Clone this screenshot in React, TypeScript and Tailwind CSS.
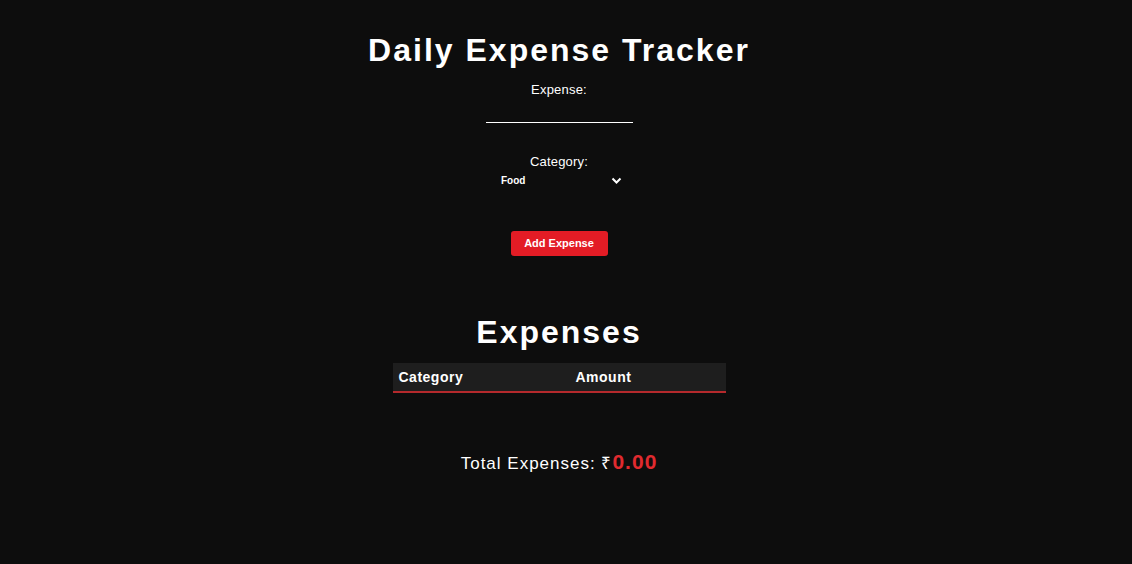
import React from "react";

export default function App() {
  return (
    <div className="min-h-[564px] w-full bg-[#0d0d0d] text-white" style={{ fontFamily: '"Liberation Sans", Arial, sans-serif' }}>
      <div className="flex flex-col items-center pt-[31px] pr-[14px]">
        <h1 className="text-[32px] leading-[38px] font-bold tracking-[2px] text-white">Daily Expense Tracker</h1>
        <label className="mt-[13px] text-[13px] leading-[16px] tracking-[0.2px]">Expense:</label>
        <div className="mt-[24px] w-[147px] h-[1px] bg-white"></div>
        <label className="mt-[31px] text-[13px] leading-[16px] tracking-[0.2px]">Category:</label>
        <div className="mt-[3px] w-[130px] h-[16px] flex items-center justify-between pl-[7px] pr-[2px]">
          <span className="text-[10px] font-bold leading-[12px]">Food</span>
          <svg width="11" height="8" viewBox="0 0 11 8" fill="none">
            <path d="M1.5 1.5 L5.5 5.5 L9.5 1.5" stroke="white" strokeWidth="2" />
          </svg>
        </div>
        <button className="mt-[42px] w-[97px] h-[25px] rounded-[3px] bg-[#e31c25] text-white text-[11px] font-bold">Add Expense</button>
        <h2 className="mt-[57px] text-[32px] leading-[38px] font-bold tracking-[2px]">Expenses</h2>
        <div className="mt-[12px] w-[333px] h-[30px] bg-[#1e1e1e] border-b-[2px] border-[#b5292c] flex items-center text-[14px] font-bold tracking-[0.5px]">
          <div className="w-[183px] pl-[6px]">Category</div>
          <div>Amount</div>
        </div>
        <div className="mt-[53px] flex items-baseline tracking-[1px]">
          <span className="text-[17px]">Total Expenses: ₹</span>
          <span className="text-[21px] font-bold text-[#e02a2f] tracking-[1px]">0.00</span>
        </div>
      </div>
    </div>
  );
}
